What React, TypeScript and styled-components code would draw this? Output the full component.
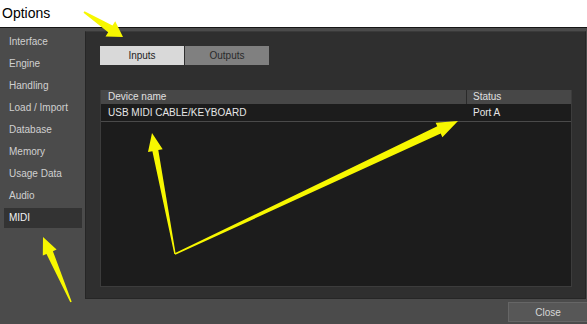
import React from 'react';
import styled, { createGlobalStyle } from 'styled-components';

const GlobalStyle = createGlobalStyle`
  * {
    box-sizing: border-box;
  }
  body {
    margin: 0;
    background: #4b4b4b;
    font-family: 'Liberation Sans', Arial, sans-serif;
  }
`;

const SECTIONS = [
  'Interface',
  'Engine',
  'Handling',
  'Load / Import',
  'Database',
  'Memory',
  'Usage Data',
  'Audio',
  'MIDI',
];

type Pt = [number, number];

// tapered annotation arrow: thin tail, wider shaft near the head, then the head
const arrowPoints = (
  tail: Pt,
  tip: Pt,
  tailW: number,
  shaftW: number,
  headLen: number,
  headW: number,
) => {
  const dx = tip[0] - tail[0];
  const dy = tip[1] - tail[1];
  const len = Math.hypot(dx, dy);
  const ux = dx / len;
  const uy = dy / len;
  const nx = -uy;
  const ny = ux;
  const bx = tip[0] - ux * headLen;
  const by = tip[1] - uy * headLen;
  const pts: Pt[] = [
    [tail[0] + (nx * tailW) / 2, tail[1] + (ny * tailW) / 2],
    [bx + (nx * shaftW) / 2, by + (ny * shaftW) / 2],
    [bx + (nx * headW) / 2, by + (ny * headW) / 2],
    tip,
    [bx - (nx * headW) / 2, by - (ny * headW) / 2],
    [bx - (nx * shaftW) / 2, by - (ny * shaftW) / 2],
    [tail[0] - (nx * tailW) / 2, tail[1] - (ny * tailW) / 2],
  ];
  return pts.map(p => `${p[0].toFixed(1)},${p[1].toFixed(1)}`).join(' ');
};

const Annotations = () => (
  <Overlay width="587" height="324" viewBox="0 0 587 324">
    <polygon points={arrowPoints([84, 12], [123, 37], 2, 8, 15, 18)} />
    <polygon points={arrowPoints([175, 254], [152, 133], 1.5, 6, 18, 15)} />
    <polygon points={arrowPoints([175, 254], [458, 121], 1.5, 8, 21, 16)} />
    <polygon points={arrowPoints([71, 302], [43, 237], 1.5, 7, 17, 15)} />
  </Overlay>
);

const App = () => {
  return (
    <>
      <GlobalStyle />
      <Window>
        <TitleBar>Options</TitleBar>
        <Main>
          <Sidebar>
            {SECTIONS.map(name => (
              <NavItem key={name} $active={name === 'MIDI'}>
                {name}
              </NavItem>
            ))}
          </Sidebar>
          <Panel>
            <Tabs>
              <Tab $active>Inputs</Tab>
              <Tab>Outputs</Tab>
            </Tabs>
            <Table>
              <HeaderRow>
                <NameCell>Device name</NameCell>
                <StatusCell $header>Status</StatusCell>
              </HeaderRow>
              <Row>
                <NameCell>USB MIDI CABLE/KEYBOARD</NameCell>
                <StatusCell>Port A</StatusCell>
              </Row>
            </Table>
          </Panel>
        </Main>
        <Footer>
          <CloseButton>Close</CloseButton>
        </Footer>
        <Annotations />
      </Window>
    </>
  );
};

const Window = styled.div`
  position: relative;
  width: 587px;
  height: 324px;
  display: flex;
  flex-direction: column;
  background: #4b4b4b;
  overflow: hidden;
`;

const TitleBar = styled.div`
  height: 28px;
  padding-left: 2px;
  background: #ffffff;
  border-bottom: 1px solid #151515;
  color: #000;
  font-size: 14px;
  line-height: 27px;
`;

const Main = styled.div`
  display: grid;
  grid-template-columns: 85px 1fr;
  height: 271px;
`;

const Sidebar = styled.nav`
  display: flex;
  flex-direction: column;
  gap: 2px;
  padding: 4px 3px 0 4px;
`;

const NavItem = styled.div<{ $active?: boolean }>`
  height: 20px;
  padding-left: 5px;
  line-height: 20px;
  font-size: 10px;
  color: ${p => (p.$active ? '#f2f2f2' : '#d0d0d0')};
  background: ${p => (p.$active ? '#333333' : 'transparent')};
`;

const Panel = styled.section`
  display: flex;
  flex-direction: column;
  margin-top: 3px;
  margin-right: 1px;
  padding: 14px 13px 11px 14px;
  background: #2f2f2f;
  border: 1px solid #262626;
  border-top-color: #3a3a3a;
`;

const Tabs = styled.div`
  display: flex;
  gap: 1px;
  margin-bottom: 25px;
`;

const Tab = styled.div<{ $active?: boolean }>`
  width: 84px;
  height: 19px;
  line-height: 19px;
  text-align: center;
  font-size: 10px;
  color: ${p => (p.$active ? '#1e1e1e' : '#2a2a2a')};
  background: ${p => (p.$active ? '#d9d9d9' : '#808080')};
`;

const Table = styled.div`
  flex: 1;
  display: flex;
  flex-direction: column;
  background: #1c1c1c;
  border: 1px solid #3c3c3c;
  border-top: none;
`;

const HeaderRow = styled.div`
  display: grid;
  grid-template-columns: 365px 1fr;
  height: 14px;
  line-height: 14px;
  background: #474747;
  color: #e0e0e0;
`;

const Row = styled.div`
  display: grid;
  grid-template-columns: 365px 1fr;
  height: 18px;
  line-height: 17px;
  border-bottom: 1px solid #4a4a4a;
  color: #e6e6e6;
`;

const NameCell = styled.div`
  padding-left: 7px;
  font-size: 10px;
`;

const StatusCell = styled.div<{ $header?: boolean }>`
  padding-left: 6px;
  font-size: 10px;
  border-left: 1px solid ${p => (p.$header ? '#2a2a2a' : 'transparent')};
`;

const Footer = styled.div`
  flex: 1;
  display: flex;
  justify-content: flex-end;
  align-items: flex-start;
  padding-top: 3px;
`;

const CloseButton = styled.button`
  width: 79px;
  height: 20px;
  padding: 0;
  border: 1px solid #666;
  border-right: none;
  background: #575757;
  color: #d8d8d8;
  font-family: 'Liberation Sans', Arial, sans-serif;
  font-size: 10px;
`;

const Overlay = styled.svg`
  position: absolute;
  left: 0;
  top: 0;
  pointer-events: none;

  polygon {
    fill: #f7f700;
  }
`;

export default App;
